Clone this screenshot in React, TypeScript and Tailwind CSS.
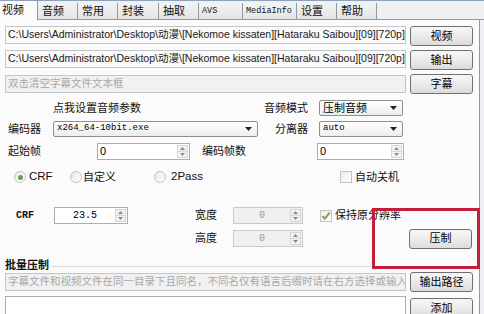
import React from "react";

const cjk = "font-['Liberation_Sans','Noto_Sans_CJK_SC',sans-serif]";
const mono = "font-['Liberation_Mono','Noto_Sans_CJK_SC',monospace]";

const tabs = [
  { label: "音频", w: "w-[40px]" },
  { label: "常用", w: "w-[40px]" },
  { label: "封装", w: "w-[41px]" },
  { label: "抽取", w: "w-[40px]" },
  { label: "AVS", w: "w-[44px]", mono: true },
  { label: "MediaInfo", w: "w-[54px]", mono: true },
  { label: "设置", w: "w-[40px]" },
  { label: "帮助", w: "w-[40px]" },
];

const Btn = ({ children, className = "" }: { children: React.ReactNode; className?: string }) => (
  <div
    className={`flex items-center justify-center h-[20px] w-[63px] rounded-[3px] border border-[#707070] bg-linear-to-b from-[#f7f7f7] via-[#ebebeb] to-[#dcdcdc] text-[11px] text-black whitespace-nowrap ${cjk} ${className}`}
  >
    {children}
  </div>
);

const Arrow = () => (
  <svg width="7" height="4" viewBox="0 0 7 4" className="shrink-0">
    <path d="M0 0h7L3.5 4z" fill="#222" />
  </svg>
);

const Dropdown = ({
  value,
  className = "",
  mono: isMono = false,
}: {
  value: string;
  className?: string;
  mono?: boolean;
}) => (
  <div
    className={`flex items-center h-[16px] rounded-[2px] border border-[#8e8f8f] bg-linear-to-b from-white to-[#ededed] pl-[3px] pr-[5px] ${className}`}
  >
    <span className={`flex-1 truncate text-black ${isMono ? `${mono} text-[9px]` : `${cjk} text-[11px]`}`}>{value}</span>
    <Arrow />
  </div>
);

const Spin = ({
  value,
  className = "",
  disabled = false,
  center = false,
}: {
  value: string;
  className?: string;
  disabled?: boolean;
  center?: boolean;
}) => (
  <div
    className={`flex h-[17px] border ${
      disabled ? "border-[#c8c8c8] bg-[#f0f0f0] text-[#9a9a9a]" : "border-[#abadb3] bg-white text-black"
    } ${className}`}
  >
    <span
      className={`flex-1 flex items-center px-[2px] leading-none ${center ? `justify-center ${mono} text-[10px]` : `${cjk} text-[11px]`}`}
    >
      {value}
    </span>
    <div className="flex flex-col w-[11px] my-px mr-px border border-[#d6d6d6] bg-[#f2f2f2]">
      <div className="flex-1 flex items-center justify-center border-b border-[#d6d6d6]">
        <svg width="5" height="3" viewBox="0 0 5 3">
          <path d="M0 3h5L2.5 0z" fill="#8a8a8a" />
        </svg>
      </div>
      <div className="flex-1 flex items-center justify-center">
        <svg width="5" height="3" viewBox="0 0 5 3">
          <path d="M0 0h5L2.5 3z" fill="#8a8a8a" />
        </svg>
      </div>
    </div>
  </div>
);

const Radio = ({ checked = false }: { checked?: boolean }) => (
  <div className="flex items-center justify-center w-[12px] h-[12px] rounded-full border border-[#c4c4c4] bg-linear-to-br from-[#e8e8e8] to-white">
    {checked && <div className="w-[5px] h-[5px] rounded-full bg-[#6f9a52]" />}
  </div>
);

const Check = ({ checked = false }: { checked?: boolean }) => (
  <div className="flex items-center justify-center w-[12px] h-[12px] border border-[#c4c4c4] bg-linear-to-br from-[#ececec] to-white">
    {checked && (
      <svg width="10" height="10" viewBox="0 0 10 10">
        <path d="M1.5 5.2l2.3 2.6L8.6 1.6" stroke="#7fa63a" strokeWidth="2" fill="none" />
      </svg>
    )}
  </div>
);

const TextBox = ({
  children,
  className = "",
  gray = false,
}: {
  children?: React.ReactNode;
  className?: string;
  gray?: boolean;
}) => (
  <div
    className={`flex items-center h-[18px] border border-[#c2c5ca] px-[2px] whitespace-nowrap overflow-hidden ${cjk} ${
      gray ? "bg-[#f1f1f1] text-[#a8a8a8]" : "bg-[#fafafa] text-[#202020]"
    } ${className}`}
  >
    {children}
  </div>
);

export default function App() {
  return (
    <div className={`relative w-[484px] h-[314px] overflow-hidden bg-[#eef0f3] ${cjk} text-[11px] text-[#111] whitespace-nowrap`}>
      {/* tab strip */}
      <div className="flex h-[20px] border-t border-[#8da2b8] border-b border-b-[#8e9aa8] bg-[#eef0f3]">
        <div className="flex items-center w-[38px] -mb-px bg-[#fbfbfb] border-r border-[#8e9aa8] pl-[2px] text-[11px]">
          视频
        </div>
        {tabs.map((t) => (
          <div
            key={t.label}
            className={`flex items-center mt-[2px] ${t.w} border-r border-[#8e9aa8] bg-linear-to-b from-[#f4f4f4] to-[#e3e3e3] ${
              t.mono ? `${mono} text-[8.5px] pl-[3px]` : "text-[11px] pl-[4px]"
            }`}
          >
            {t.label}
          </div>
        ))}
      </div>

      {/* panel */}
      <div className="flex flex-col w-[480px] h-[294px] bg-[#fbfbfb] border-r border-[#8e9aa8]">
        <div className="flex items-start h-[20px] mt-[6px]">
          <TextBox className="ml-[5px] w-[401px] text-[10.5px]">
            C:\Users\Administrator\Desktop\动漫\[Nekomoe kissaten][Hataraku Saibou][09][720p][(
          </TextBox>
          <Btn className="ml-[4px]">视频</Btn>
        </div>
        <div className="flex items-start h-[20px] mt-[4px]">
          <TextBox className="ml-[5px] w-[401px] text-[10.5px]">
            C:\Users\Administrator\Desktop\动漫\[Nekomoe kissaten][Hataraku Saibou][09][720p][(
          </TextBox>
          <Btn className="ml-[4px]">输出</Btn>
        </div>
        <div className="flex items-start h-[20px] mt-[4px]">
          <TextBox gray className="ml-[5px] mt-px w-[401px] text-[10.5px]">
            双击清空字幕文件文本框
          </TextBox>
          <Btn className="ml-[4px]">字幕</Btn>
        </div>

        <div className="flex items-center h-[16px] mt-[6px]">
          <span className="ml-[53px] w-[211px]">点我设置音频参数</span>
          <span className="w-[44px]">音频模式</span>
          <Dropdown className="ml-[11px] w-[84px]" value="压制音频" />
        </div>
        <div className="flex items-center h-[16px] mt-[5px]">
          <span className="ml-[8px] w-[45px]">编码器</span>
          <Dropdown className="w-[205px]" value="x264_64-10bit.exe" mono />
          <span className="ml-[17px] w-[33px]">分离器</span>
          <Dropdown className="ml-[11px] w-[84px]" value="auto" mono />
        </div>
        <div className="flex items-center h-[17px] mt-[6px]">
          <span className="ml-[8px] w-[89px]">起始帧</span>
          <Spin className="w-[93px]" value="0" />
          <span className="ml-[12px] w-[115px]">编码帧数</span>
          <Spin className="w-[87px]" value="0" />
        </div>

        <div className="flex items-center h-[14px] mt-[10px]">
          <div className="flex items-center gap-[3px] ml-[14px] w-[56px]">
            <Radio checked />
            <span className="text-[11.5px]">CRF</span>
          </div>
          <div className="flex items-center gap-[1px] w-[84px]">
            <Radio />
            <span>自定义</span>
          </div>
          <div className="flex items-center gap-[5px] w-[186px]">
            <Radio />
            <span className="text-[11.5px]">2Pass</span>
          </div>
          <div className="flex items-center gap-[3px]">
            <Check />
            <span>自动关机</span>
          </div>
        </div>

        <div className="flex items-center h-[19px] mt-[23px]">
          <span className={`ml-[16px] w-[38px] ${mono} text-[10px] font-bold`}>CRF</span>
          <Spin className="w-[74px]" value="23.5" center />
          <span className="ml-[67px] w-[38px]">宽度</span>
          <Spin className="w-[70px]" value="0" disabled center />
          <div className="flex items-center gap-[3px] ml-[17px]">
            <Check checked />
            <span>保持原分辨率</span>
          </div>
        </div>
        <div className="flex items-center h-[19px] mt-[5px]">
          <span className="ml-[195px] w-[38px]">高度</span>
          <Spin className="w-[70px]" value="0" disabled center />
          <Btn className="ml-[106px] border-[#3c7fb1] from-[#eaf6fd] via-[#d9f0fc] to-[#bee6fd]">压制</Btn>
        </div>

        <div className="flex items-center h-[14px] mt-[10px]">
          <span className="ml-[5px] font-bold">批量压制</span>
          <div className="flex-1 mt-[3px] mr-[6px] ml-[2px] h-px bg-[#d5dfe5]" />
        </div>
        <div className="flex items-start h-[20px]">
          <TextBox gray className="ml-[5px] mt-px w-[401px] text-[10.5px]">
            字幕文件和视频文件在同一目录下且同名，不同名仅有语言后缀时请在右方选择或输入
          </TextBox>
          <Btn className="ml-[4px]">输出路径</Btn>
        </div>
        <div className="flex items-start mt-[4px]">
          <div className="ml-[5px] w-[401px] h-[30px] border border-[#abadb3] bg-white" />
          <Btn className="ml-[4px] mt-[2px]">添加</Btn>
        </div>
      </div>

      {/* annotation box */}
      <div className="absolute left-[372px] top-[208px] w-[108px] h-[61px] border-[3px] border-[#c41e3a]" />
    </div>
  );
}
